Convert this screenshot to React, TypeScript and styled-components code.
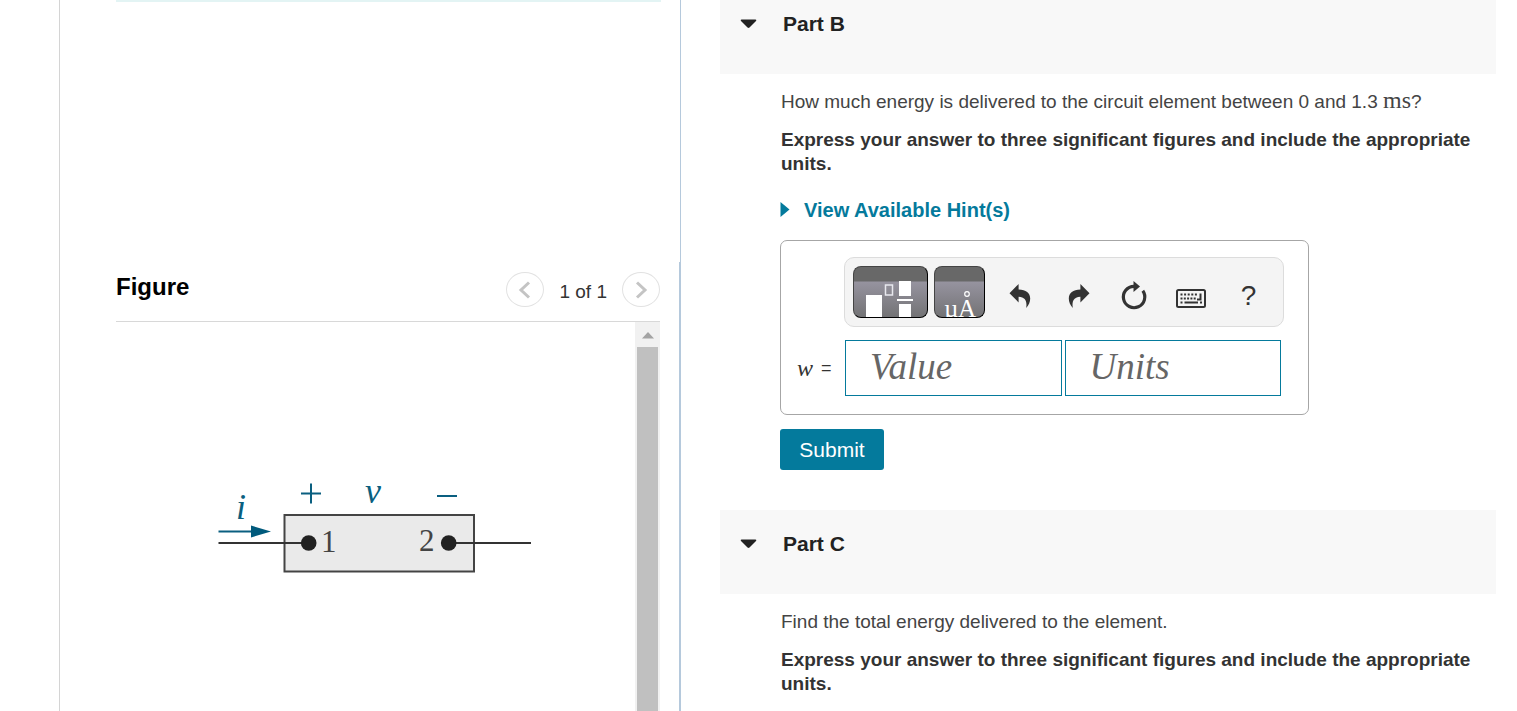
import React from "react";
import styled, { createGlobalStyle } from "styled-components";

const GlobalStyle = createGlobalStyle`
  * { box-sizing: border-box; }
  body {
    margin: 0;
    background: #fff;
    color: #333;
    font-family: "Liberation Sans", Arial, sans-serif;
    font-size: 20px;
    line-height: 24px;
  }
  h2, p { margin: 0; }
  button, input { font-family: inherit; }
`;

const Page = styled.div`
  display: grid;
  grid-template-columns: 311fr 388fr;
  column-gap: 39px;
  height: 100vh;
  padding: 0 21px 0 59px;
  overflow: hidden;
`;

const LeftColumn = styled.aside`
  display: flex;
  flex-direction: column;
  min-width: 0;
  border-left: 1px solid #d4d4d4;
  border-right: 1px solid #b5c9dc;
`;

const ProblemArea = styled.div`
  height: 262px;
  flex: none;
  padding: 0 19px 0 56px;
`;

const ProblemEdge = styled.div`
  height: 2px;
  background: #e3f4f4;
`;

const FigurePanel = styled.section`
  display: flex;
  flex: 1;
  flex-direction: column;
  min-height: 0;
  padding: 10px 19px 0 56px;
  border-right: 1px solid #b5c9dc;
`;

const FigureHeader = styled.header`
  display: flex;
  align-items: flex-start;
  justify-content: space-between;
  height: 50px;
  flex: none;
  border-bottom: 1px solid #d8d8d8;
`;

const FigureTitle = styled.h2`
  color: #000;
  font-size: 24px;
  line-height: 30px;
`;

const Pager = styled.nav`
  display: flex;
  align-items: center;
`;

const PagerText = styled.span`
  padding: 4px 15px 0;
  font-size: 19px;
`;

const PagerButton = styled.button`
  display: flex;
  align-items: center;
  justify-content: center;
  width: 38px;
  height: 35px;
  padding: 0;
  border: 1px solid #e2e2e2;
  border-radius: 50%;
  background: #fff;
`;

const FigureView = styled.div`
  display: flex;
  flex: 1;
  min-height: 0;
`;

const Drawing = styled.div`
  flex: 1;
  padding: 148px 0 0 92px;
`;

const ScrollTrack = styled.div`
  display: flex;
  flex-direction: column;
  align-items: center;
  width: 25px;
  background: #f1f1f1;
`;

const ScrollArrow = styled.svg`
  flex: none;
  margin: 10px 0 8px;
`;

const ScrollThumb = styled.div`
  flex: 1;
  width: 21px;
  background: #c0c0c0;
`;

const RightColumn = styled.main`
  min-width: 0;
  margin-top: -10px;
`;

const PartHeader = styled.header`
  height: 84px;
  padding: 22px 20px;
  background: #f8f8f8;
`;

const PartToggle = styled.button`
  display: flex;
  align-items: center;
  gap: 26px;
  padding: 0;
  border: 0;
  background: none;
  color: #222;
  font-size: 21px;
  font-weight: bold;
  line-height: 24px;
`;

const PartBody = styled.div`
  padding: 16px 0 40px 60px;
`;

const Question = styled.p`
  padding-left: 1px;
  color: #444;
  font-size: 19px;
`;

const Instruction = styled.p`
  margin-top: 14px;
  padding-left: 1px;
  font-size: 19px;
  font-weight: bold;
`;

const MathText = styled.span<{ $italic?: boolean }>`
  font-family: "Liberation Serif", "Times New Roman", serif;
  font-size: 24px;
  font-style: ${(p) => (p.$italic ? "italic" : "normal")};
  line-height: 20px;
`;

const HintLink = styled.a`
  display: flex;
  align-items: center;
  gap: 14px;
  width: fit-content;
  margin-top: 22px;
  color: #047a9c;
  font-size: 20px;
  font-weight: bold;
  text-decoration: none;
`;

const AnswerBox = styled.div`
  display: grid;
  grid-template-columns: 47px 440px;
  row-gap: 13px;
  width: fit-content;
  margin-top: 18px;
  padding: 16px 24px 18px 16px;
  border: 1px solid #a6a6a6;
  border-radius: 7px;
`;

const Toolbar = styled.div`
  display: flex;
  grid-column: 2;
  align-items: center;
  height: 70px;
  padding: 0 6px 0 8px;
  border: 1px solid #dcdcdc;
  border-radius: 10px;
  background: #f4f4f4;
`;

const PaletteButton = styled.button<{ $width: number }>`
  width: ${(p) => p.$width}px;
  height: 52px;
  margin-right: 6px;
  padding: 0;
  overflow: hidden;
  border: 1px solid #000;
  border-top-color: #444;
  border-left-color: #444;
  border-radius: 8px;
  background: linear-gradient(#686868 0 14px, #96939f 15px, #737375);

  svg { display: block; }
`;

const ToolButton = styled.button`
  display: flex;
  flex: 1;
  align-items: center;
  justify-content: center;
  height: 52px;
  padding: 8px 0 0;
  border: 0;
  background: none;
  color: #333;
  font-size: 28px;
`;

const AnswerLabel = styled.label`
  display: flex;
  align-items: center;
  gap: 8px;
  font-size: 18px;
`;

const Fields = styled.div`
  display: grid;
  grid-template-columns: 1fr 1fr;
  gap: 3px;
  padding: 0 3px 0 1px;
`;

const Field = styled.input`
  min-width: 0;
  height: 56px;
  padding: 0 24px 3px;
  border: 1px solid #047a9c;
  border-radius: 0;
  background: #fff;
  color: #333;
  font-family: "Liberation Serif", "Times New Roman", serif;
  font-size: 37px;
  font-style: italic;

  &::placeholder { color: #666; opacity: 1; }
`;

const SubmitButton = styled.button`
  display: block;
  width: 104px;
  height: 41px;
  margin-top: 14px;
  padding: 0;
  border: 0;
  border-radius: 3px;
  background: #047a9c;
  color: #fff;
  font-size: 21px;
`;

const Chevron = ({ next }: { next?: boolean }) => (
  <svg width="14" height="18" viewBox="0 0 14 18" fill="none" stroke="#c4c4c4" strokeWidth="3">
    <path d={next ? "M3 1.5L11 9L3 16.5" : "M11 1.5L3 9L11 16.5"} />
  </svg>
);

const CircuitFigure = () => (
  <svg width="330" height="110" viewBox="208 470 330 110" role="img" aria-label="Circuit element">
    <rect x="284.5" y="515" width="189.5" height="56.5" fill="#eaeaea" stroke="#444" strokeWidth="2" />
    <path d="M218.5 543H308M449 543H531" stroke="#333" strokeWidth="2" />
    <circle cx="308.7" cy="543" r="7.8" fill="#222" />
    <circle cx="448.7" cy="543" r="7.8" fill="#222" />
    <path d="M218.5 531.5H253M301 493.5H321M311 483.5V503.5M437 496H457" stroke="#0a5f80" strokeWidth="2" />
    <path d="M251 525.5L271 531.5L251 537.5Z" fill="#005a7c" />
    <g fontFamily="'Liberation Serif', serif">
      <g fill="#0a5f80" fontStyle="italic">
        <text x="236" y="519" fontSize="36">i</text>
        <text x="365" y="503" fontSize="36">v</text>
      </g>
      <g fill="#444" fontSize="31">
        <text x="321" y="552">1</text>
        <text x="419" y="551">2</text>
      </g>
    </g>
  </svg>
);

const TemplatesIcon = () => (
  <svg width="73" height="50" viewBox="0 0 73 50">
    <path d="M12 28H28V50H12ZM45 14H57V29H45ZM45 37H57V50H45ZM43 32H59V34H43Z" fill="#fff" />
    <path d="M31.5 18H38.5V28H31.5Z" fill="none" stroke="#e8e8ee" strokeWidth="1.5" />
  </svg>
);

const UnitsIcon = () => (
  <svg width="49" height="50" viewBox="0 0 49 50" fill="#fff" fontFamily="'Liberation Serif', serif">
    <text x="9" y="50" fontSize="25">µ</text>
    <text x="23" y="50" fontSize="25">A</text>
    <circle cx="32" cy="27" r="2.3" fill="none" stroke="#fff" strokeWidth="1.2" />
  </svg>
);

const CurvedArrow = ({ forward }: { forward?: boolean }) => (
  <svg width="26" height="26" viewBox={forward ? "0 0 26 26" : "-2 0 26 26"} fill="currentColor">
    <path
      transform={forward ? "translate(26 0) scale(-1 1)" : undefined}
      d="M0.5 10.2L9.6 1V6.4C17 6.5 21.2 9.7 21.2 15.5C21.2 19 19.8 22 17.2 25C18.2 18.4 16.5 14.2 9.6 13.8V19.4Z"
    />
  </svg>
);

const ResetIcon = () => (
  <svg width="28" height="30" viewBox="0 0 28 30">
    <path d="M22.8 9.8A10.7 10.7 0 1 1 14 5.3" fill="none" stroke="#333" strokeWidth="3.2" />
    <path d="M13.5 0L20 5.5L13.5 11Z" fill="#333" />
  </svg>
);

const KeyboardIcon = () => (
  <svg width="30" height="28" viewBox="0 -2 30 28" fill="none" stroke="#333">
    <rect x="1" y="6" width="28" height="17" rx="1.5" strokeWidth="2" />
    <path d="M4.5 10.5H22" strokeWidth="2" strokeDasharray="2 1.6" />
    <path d="M4.5 14.5H20" strokeWidth="2" strokeDasharray="2 1.3" />
    <path d="M24.5 9.5V15.5H21M4.5 18.5H6.5M8.5 18.5H22M24 18.5H26" strokeWidth="2" />
  </svg>
);

const Part = ({ title, children }: { title: string; children: React.ReactNode }) => (
  <section>
    <PartHeader>
      <PartToggle aria-expanded="true">
        <svg width="17" height="10" viewBox="0 0 17 10" fill="#222">
          <path d="M1.5 0.5H15.5Q17 0.5 16 2L9.5 8.5Q8.5 9.3 7.5 8.5L1 2Q0 0.5 1.5 0.5Z" />
        </svg>
        {title}
      </PartToggle>
    </PartHeader>
    <PartBody>{children}</PartBody>
  </section>
);

const instruction =
  "Express your answer to three significant figures and include the appropriate units.";

export default function App() {
  return (
    <>
      <GlobalStyle />
      <Page>
        <LeftColumn>
          <ProblemArea>
            <ProblemEdge />
          </ProblemArea>
          <FigurePanel>
            <FigureHeader>
              <FigureTitle>Figure</FigureTitle>
              <Pager aria-label="Figures">
                <PagerButton aria-label="Previous figure"><Chevron /></PagerButton>
                <PagerText>1 of 1</PagerText>
                <PagerButton aria-label="Next figure"><Chevron next /></PagerButton>
              </Pager>
            </FigureHeader>
            <FigureView>
              <Drawing><CircuitFigure /></Drawing>
              <ScrollTrack>
                <ScrollArrow width="12" height="7" viewBox="0 0 12 7" fill="#a3a3a3">
                  <path d="M6 0L12 6.5H0Z" />
                </ScrollArrow>
                <ScrollThumb />
              </ScrollTrack>
            </FigureView>
          </FigurePanel>
        </LeftColumn>
        <RightColumn>
          <Part title="Part B">
            <Question>
              How much energy is delivered to the circuit element between 0 and 1.3{" "}
              <MathText>ms</MathText>?
            </Question>
            <Instruction>{instruction}</Instruction>
            <HintLink href="#hints">
              <svg width="10" height="16" viewBox="0 0 10 16" fill="currentColor">
                <path d="M0.5 0L9.5 7.5L0.5 15Z" />
              </svg>
              View Available Hint(s)
            </HintLink>
            <AnswerBox>
              <Toolbar role="toolbar" aria-label="Math tools">
                <PaletteButton $width={75} aria-label="Templates"><TemplatesIcon /></PaletteButton>
                <PaletteButton $width={51} aria-label="Units"><UnitsIcon /></PaletteButton>
                <ToolButton aria-label="Undo"><CurvedArrow /></ToolButton>
                <ToolButton aria-label="Redo"><CurvedArrow forward /></ToolButton>
                <ToolButton aria-label="Reset"><ResetIcon /></ToolButton>
                <ToolButton aria-label="Keyboard shortcuts"><KeyboardIcon /></ToolButton>
                <ToolButton aria-label="Help">?</ToolButton>
              </Toolbar>
              <AnswerLabel htmlFor="value">
                <MathText $italic>w</MathText>=
              </AnswerLabel>
              <Fields>
                <Field id="value" placeholder="Value" />
                <Field aria-label="Units" placeholder="Units" />
              </Fields>
            </AnswerBox>
            <SubmitButton>Submit</SubmitButton>
          </Part>
          <Part title="Part C">
            <Question>Find the total energy delivered to the element.</Question>
            <Instruction>{instruction}</Instruction>
          </Part>
        </RightColumn>
      </Page>
    </>
  );
}
